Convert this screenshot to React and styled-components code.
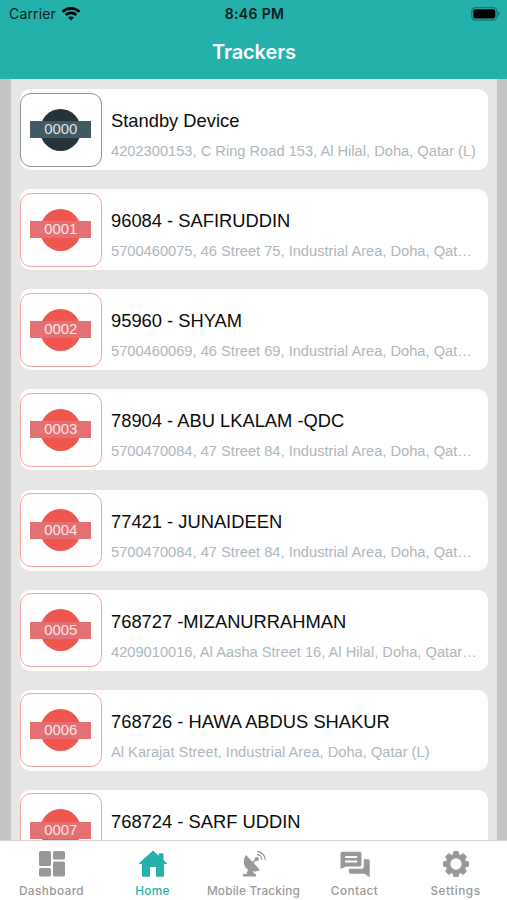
import React from 'react';
import styled, { createGlobalStyle } from 'styled-components';

const GlobalStyle = createGlobalStyle`
* { box-sizing: border-box; }
body { margin: 0; }
`;

const Screen = styled.div`
display: flex;
flex-direction: column;
width: 507px;
height: 900px;
overflow: hidden;
background: #c5c5c5;
font-family: "Liberation Sans", Arial, sans-serif;
`;

const Header = styled.header`
flex: none;
height: 79px;
background: #24b1ac;
`;

const StatusBar = styled.div`
display: grid;
grid-template-columns: 1fr 1fr 1fr;
align-items: center;
height: 27px;
padding: 0 7px 0 9px;
font-family: Inter, sans-serif;
font-size: 14px;
color: #08201f;
`;

const Carrier = styled.div`
display: flex;
align-items: center;
gap: 5px;
letter-spacing: 0.15px;
`;

const Time = styled.div`
text-align: center;
font-weight: 600;
letter-spacing: 0.35px;
`;

const Battery = styled.div`
display: flex;
justify-content: flex-end;
`;

const Title = styled.h1`
margin: 0;
padding-left: 1px;
line-height: 51px;
text-align: center;
font-family: Inter, sans-serif;
font-size: 20px;
font-weight: 600;
letter-spacing: -0.1px;
color: #fff;
`;

const List = styled.main`
flex: 1;
min-height: 0;
margin: 0 10px 0 11px;
padding: 10px 9px 0;
overflow: hidden;
background: #e6e6e6;
`;

const Card = styled.article`
display: flex;
align-items: center;
height: 81px;
margin-bottom: 19.13px;
border-radius: 10px;
background: #fff;
`;

const Thumb = styled.div`
display: flex;
flex: none;
align-items: center;
justify-content: center;
width: 81.5px;
height: 74px;
border: 1px solid ${p => (p.$standby ? '#8f9295' : '#f2a3a0')};
border-radius: 11px;
`;

const Disc = styled.div`
display: flex;
flex: none;
align-items: center;
justify-content: center;
width: 41px;
height: 42px;
border-radius: 50%;
background: ${p => (p.$standby ? '#25333b' : '#ef564d')};
`;

const Band = styled.div`
flex: none;
width: 61px;
height: 17px;
line-height: 17px;
text-align: center;
font-size: 14.9px;
color: ${p => (p.$standby ? '#dce3e6' : '#fbe3e1')};
background: ${p => (p.$standby ? '#435a64' : '#e37073')};
`;

const Info = styled.div`
flex: 1;
min-width: 0;
padding: 12px 0 0 9.5px;
`;

const Name = styled.div`
line-height: 24px;
font-size: 18.33px;
white-space: nowrap;
color: #0b0b0b;
`;

const Address = styled.div`
height: 22px;
margin-top: 7px;
line-height: 22px;
overflow: hidden;
font-size: 14.66px;
white-space: nowrap;
color: #adb7be;
`;

const TabBar = styled.nav`
display: grid;
grid-template-columns: repeat(5, 101px);
flex: none;
height: 60px;
padding-left: 1px;
border-top: 1px solid #d6d6d6;
background: #fff;
`;

const Tab = styled.div`
display: flex;
flex-direction: column;
align-items: center;
padding-top: 8.5px;
font-family: Inter, sans-serif;
font-size: 11.8px;
font-weight: 500;
line-height: 16px;
letter-spacing: ${p => p.$spacing || 0}px;
white-space: nowrap;
color: ${p => (p.$active ? '#24b1ac' : '#989898')};

svg {
  flex: none;
  margin-bottom: 5.5px;
}
`;

const trackers = [
    { id: '0000', name: 'Standby Device', address: '4202300153, C Ring Road 153, Al Hilal, Doha, Qatar (L)', standby: true },
    { id: '0001', name: '96084 - SAFIRUDDIN', address: '5700460075, 46 Street 75, Industrial Area, Doha, Qat…' },
    { id: '0002', name: '95960 - SHYAM', address: '5700460069, 46 Street 69, Industrial Area, Doha, Qat…' },
    { id: '0003', name: '78904 - ABU LKALAM -QDC', address: '5700470084, 47 Street 84, Industrial Area, Doha, Qat…' },
    { id: '0004', name: '77421 - JUNAIDEEN', address: '5700470084, 47 Street 84, Industrial Area, Doha, Qat…' },
    { id: '0005', name: '768727 -MIZANURRAHMAN', address: '4209010016, Al Aasha Street 16, Al Hilal, Doha, Qatar…' },
    { id: '0006', name: '768726 - HAWA ABDUS SHAKUR', address: 'Al Karajat Street, Industrial Area, Doha, Qatar (L)' },
    { id: '0007', name: '768724 - SARF UDDIN', address: '' },
];

const WifiIcon = () => (
    <svg width="20" height="14" viewBox="0 0 20 14" fill="none" stroke="#000" strokeWidth="2.7">
        <path d="M1.5 4.8C6.2.2 13.8.2 18.5 4.8" />
        <path d="M4.7 8C7.7 5.2 12.3 5.2 15.3 8" />
        <path d="M10 13.4 7.1 10.5C8.7 9 11.3 9 12.9 10.5Z" fill="#000" stroke="none" />
    </svg>
);

const BatteryIcon = () => (
    <svg width="29" height="14" viewBox="0 0 29 14">
        <rect x=".7" y=".7" width="25.2" height="12.4" rx="3.6" fill="none" stroke="#147570" strokeWidth="1.2" />
        <rect x="2.3" y="2.3" width="22" height="9.2" rx="2" fill="#000" />
        <path d="M27.2 4.8C29.2 5.5 29.2 8.3 27.2 9Z" fill="#147570" />
    </svg>
);

const DashboardIcon = () => (
    <svg width="28" height="28" viewBox="0 0 28 28" fill="currentColor">
        <rect x="1" y="1" width="12" height="15" rx="1.6" />
        <rect x="15" y="1" width="12" height="8.6" rx="1.6" />
        <rect x="1" y="18" width="12" height="8.6" rx="1.6" />
        <rect x="15" y="11.6" width="12" height="15" rx="1.6" />
    </svg>
);

const HomeIcon = () => (
    <svg width="30" height="28" viewBox="0 0 30 28" fill="currentColor" stroke="currentColor" strokeLinejoin="round">
        <path d="M15 1 1.2 13.6H4.5V26.2H11.5V16.5H18.5V26.2H25.5V13.6H28.8L25 10.1V3.8H21.3V6.7Z" />
    </svg>
);

const DishIcon = () => (
    <svg width="28" height="28" viewBox="0 0 28 28" fill="currentColor">
        <path d="M6 5 20 20C15.5 22.5 9 22 5.6 17.5C3 13.8 3.4 8.5 6 5Z" />
        <path d="M8 19.5 12 20.5 14.5 24H16V26.5H3V24H6.5Z" />
        <path d="M12.5 13 16.7 8.7" stroke="currentColor" strokeWidth="1.6" />
        <circle cx="16.8" cy="9" r="2.1" />
        <path d="M17 4.6A5.2 5.2 0 0 1 21.8 9.8M17 1.4A8.7 8.7 0 0 1 25.2 9.8" fill="none" stroke="currentColor" strokeWidth="1.3" />
    </svg>
);

const ContactIcon = () => (
    <svg width="32" height="28" viewBox="0 0 32 28" fill="currentColor">
        <path fillRule="evenodd" d="M3.2 1.7H20.8Q22.5 1.7 22.5 3.4V14.8Q22.5 16.5 20.8 16.5H7.2L1.5 19V3.4Q1.5 1.7 3.2 1.7ZM6.2 6V8H18.2V6ZM6.2 10.6V12.6H18.2V10.6Z" />
        <path d="M24.8 9.2H29Q30.7 9.2 30.7 10.9V27.2L25.5 23.8H11.7Q10 23.8 10 22.1V18.8H23.1Q24.8 18.8 24.8 17.1Z" />
    </svg>
);

const teeth = [0, 45, 90, 135, 180, 225, 270, 315];

const SettingsIcon = () => (
    <svg width="28" height="28" viewBox="0 0 28 28">
        <circle cx="14" cy="14" r="8" fill="none" stroke="currentColor" strokeWidth="4.6" />
        {teeth.map(a => (
            <rect key={a} x="11" y="1" width="6" height="5" rx="1.8" fill="currentColor" transform={`rotate(${a} 14 14)`} />
        ))}
    </svg>
);

const tabs = [
    { label: 'Dashboard', Icon: DashboardIcon, spacing: 0.4 },
    { label: 'Home', Icon: HomeIcon, active: true, spacing: 0.3 },
    { label: 'Mobile Tracking', Icon: DishIcon, spacing: 0.2 },
    { label: 'Contact', Icon: ContactIcon, spacing: 0.4 },
    { label: 'Settings', Icon: SettingsIcon, spacing: 0.5 },
];

const TrackerCard = ({ tracker }) => (
    <Card>
        <Thumb $standby={tracker.standby}>
            <Disc $standby={tracker.standby}>
                <Band $standby={tracker.standby}>{tracker.id}</Band>
            </Disc>
        </Thumb>
        <Info>
            <Name>{tracker.name}</Name>
            <Address>{tracker.address}</Address>
        </Info>
    </Card>
);

export default function App() {
    return (
        <Screen>
            <GlobalStyle />
            <Header>
                <StatusBar>
                    <Carrier>Carrier <WifiIcon /></Carrier>
                    <Time>8:46 PM</Time>
                    <Battery><BatteryIcon /></Battery>
                </StatusBar>
                <Title>Trackers</Title>
            </Header>
            <List>
                {trackers.map(t => <TrackerCard key={t.id} tracker={t} />)}
            </List>
            <TabBar>
                {tabs.map(({ label, Icon, active, spacing }) => (
                    <Tab key={label} $active={active} $spacing={spacing}>
                        <Icon />
                        {label}
                    </Tab>
                ))}
            </TabBar>
        </Screen>
    );
}
